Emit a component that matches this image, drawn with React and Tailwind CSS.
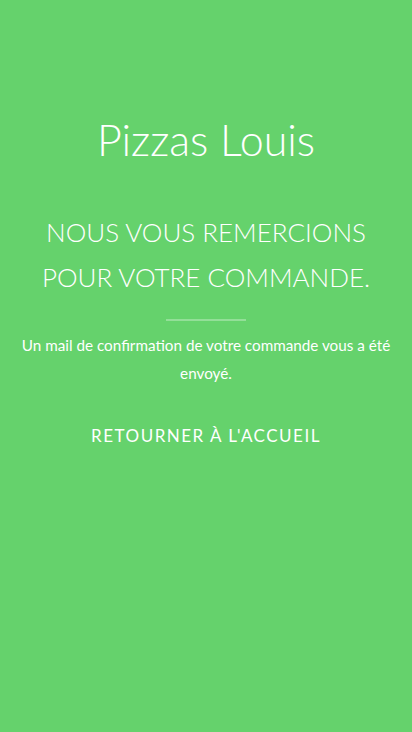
import React from "react";

function App() {
  return (
    <div className="min-h-[732px] w-full bg-[#65d26c] text-white font-['Lato','Open_Sans',sans-serif] text-center">
      <div className="flex flex-col items-center px-5 pt-[112px]">
        {/* titre */}
        <h1 className="text-[43px] font-light leading-[56px]">Pizzas Louis</h1>

        <h2 className="mt-[42px] text-[26px] font-light leading-[45px] uppercase">
          Nous vous remercions
          <br />
          pour votre commande.
        </h2>

        <hr className="mt-[19px] w-[80px] border-0 h-[2px] bg-white/30" />

        <p className="mt-[10px] text-[15.25px] leading-[28px]">
          Un mail de confirmation de votre commande vous a été envoyé.
        </p>

        <a href="#" className="mt-[36px] text-[17px] tracking-[1.5px] uppercase">
          Retourner à l'accueil
        </a>
      </div>
    </div>
  );
}

export default App;
